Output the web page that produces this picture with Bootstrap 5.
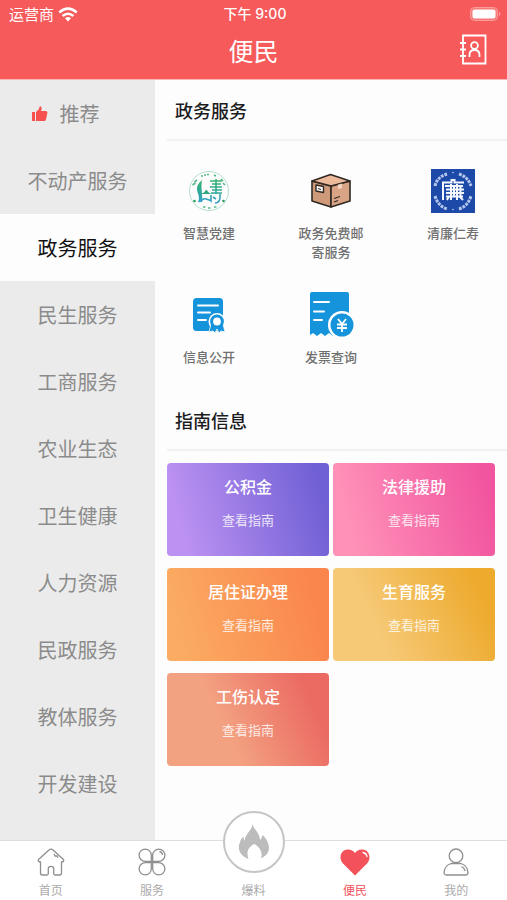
<!DOCTYPE html>
<html lang="zh-CN">
<head>
<meta charset="utf-8">
<meta name="viewport" content="width=device-width, initial-scale=1">
<title>便民</title>
<link href="https://cdn.jsdelivr.net/npm/bootstrap@5.3.0/dist/css/bootstrap.min.css" rel="stylesheet">
<style>
body{font-family:"Noto Sans CJK SC",sans-serif;background:#fdfdfd;color:#1c1c1e}
svg{display:block;flex:none}
a{text-decoration:none}
.top-area{background:#f65a5b;color:#fff;border-bottom:1px solid #fbb4b4}
.status-line{height:28px;font-size:15px;line-height:28px;padding:0 6px 0 9px}
.status-line .clock{font-family:Inter,"Noto Sans CJK SC",sans-serif;font-size:14px;font-weight:500}
.title-line{height:51px;padding-bottom:8px}
.title-line h1{font-size:25px;line-height:36px;font-weight:400}
.title-line .btn{margin-right:20px}
.side-nav{width:155px;background:#ebebeb}
.side-nav .nav-link{height:67px;padding:0;font-size:20px;line-height:28px;color:#8b8b8b}
.side-nav .nav-link.active{background:#fdfdfd;color:#111}
.section-title{height:61px;margin-left:12px;padding-left:8px;font-size:18px;line-height:28px;font-weight:500;border-bottom:2px solid #f2f2f2}
.service-grid{display:grid;grid-template-columns:repeat(3,72px);justify-content:space-between;row-gap:30px;padding:26px 18px 24px}
.service{font-size:13px;line-height:19px;color:#707070;font-weight:500}
.service .pic{height:48px;margin-bottom:8px}
.guide-grid{display:grid;grid-template-columns:1fr 1fr;gap:12px 4px;padding:12px 12px 24px}
.guide{height:93px;border-radius:4px;color:#fff;padding-top:11px;font-size:13px;line-height:20px}
.guide strong{font-size:16px;line-height:24px;font-weight:500;margin-bottom:12px}
.guide span{opacity:.8}
.g-fund{background:linear-gradient(75deg,#bb91f1 12%,#7060d5 92%)}
.g-law{background:linear-gradient(75deg,#ff91b8 12%,#f1559f 92%)}
.g-live{background:linear-gradient(75deg,#fbac62 8%,#fa854d 90%)}
.g-birth{background:linear-gradient(65deg,#f6c977 28%,#edaa2d 88%)}
.g-work{background:linear-gradient(65deg,#f3a281 36%,#eb6b63 85%)}
.tab-bar{height:60px;background:#fff;border-top:1px solid #dedede}
.tab-bar a{flex:1 1 0;color:#aaa;font-size:12px;line-height:17px;padding-bottom:2px}
.tab-bar a.active{color:#f4525b}
.tab-bar svg{margin-bottom:5px}
.tab-bar .flame{width:62px;height:62px;border:2px solid #c5c5c5;border-radius:50%;background:#fff;margin-bottom:8px}
.tab-bar .flame svg{margin:0}
</style>
<script src="https://cdn.jsdelivr.net/npm/bootstrap@5.3.0/dist/js/bootstrap.bundle.min.js"></script>
</head>
<body class="d-flex flex-column min-vh-100">
<header class="top-area">
  <div class="status-line row g-0">
    <div class="col d-flex align-items-center gap-1">
      <span>运营商</span>
      <svg width="20" height="15" viewBox="0 0 20 15" fill="none" stroke="#fff" stroke-width="2.6" aria-hidden="true"><path d="M1.3 5.4Q10-2.1 18.7 5.4M4.6 9Q10 4.5 15.4 9"/><path d="M7 11.3Q10 8.8 13 11.3L10 14.5Z" fill="#fff" stroke="none"/></svg>
    </div>
    <div class="col-auto clock">下午 9:00</div>
    <div class="col d-flex align-items-center justify-content-end">
      <svg width="31" height="15" viewBox="0 0 31 15" aria-hidden="true"><rect x=".5" y=".5" width="27" height="13" rx="4" fill="#f77879" stroke="#fa9c9c"/><rect x="2.5" y="2.5" width="23" height="9" rx="2" fill="#fff"/><path d="M29 5v4q1.5-.6 1.5-2T29 5" fill="#faa0a0"/></svg>
    </div>
  </div>
  <div class="title-line row g-0 align-items-center">
    <div class="col"></div>
    <h1 class="col-auto m-0">便民</h1>
    <div class="col d-flex justify-content-end">
      <button type="button" class="btn p-0 border-0" aria-label="通讯录">
        <svg width="28" height="31" viewBox="0 0 28 31" fill="none" stroke="#fff" stroke-width="1.8"><path d="M4 1.5H26.5V29.5H4ZM1 9h6M1 15.5h6M1 22h6"/><circle cx="15.5" cy="11.5" r="3.4"/><path d="M10.500 23v-2q0-5 5-5t5 5v2"/></svg>
      </button>
    </div>
  </div>
</header>

<main class="d-flex flex-grow-1">
  <nav class="side-nav nav flex-column flex-nowrap flex-shrink-0" aria-label="服务分类">
    <a href="#" class="nav-link d-flex align-items-center justify-content-center pe-4"><svg width="16" height="16" viewBox="0 0 16 16" fill="#f6514f" class="me-2" aria-hidden="true"><path d="M0 6h3v9H0ZM4 6l3-3 .5-2.300Q8.400-.3 9.300 1q.7 1.500-.3 4h5q1.600.3 1.400 2L14 13.500Q13.600 15 12 15H4Z"/></svg><span class="ms-1">推荐</span></a>
    <a href="#" class="nav-link d-flex align-items-center justify-content-center">不动产服务</a>
    <a href="#" class="nav-link active d-flex align-items-center justify-content-center" aria-current="true">政务服务</a>
    <a href="#" class="nav-link d-flex align-items-center justify-content-center">民生服务</a>
    <a href="#" class="nav-link d-flex align-items-center justify-content-center">工商服务</a>
    <a href="#" class="nav-link d-flex align-items-center justify-content-center">农业生态</a>
    <a href="#" class="nav-link d-flex align-items-center justify-content-center">卫生健康</a>
    <a href="#" class="nav-link d-flex align-items-center justify-content-center">人力资源</a>
    <a href="#" class="nav-link d-flex align-items-center justify-content-center">民政服务</a>
    <a href="#" class="nav-link d-flex align-items-center justify-content-center">教体服务</a>
    <a href="#" class="nav-link d-flex align-items-center justify-content-center">开发建设</a>
  </nav>

  <div class="flex-grow-1">
    <section>
      <h2 class="section-title d-flex align-items-center mb-0">政务服务</h2>
      <div class="service-grid">
        <a href="#" class="service text-center">
          <span class="pic d-flex align-items-center justify-content-center"><svg width="42" height="42" viewBox="0 0 42 42" fill="none" aria-hidden="true">
            <defs><linearGradient id="leaf" gradientUnits="userSpaceOnUse" x1="0" y1="9" x2="0" y2="34"><stop offset="0" stop-color="#38b36c"/><stop offset=".55" stop-color="#2fa89a"/><stop offset="1" stop-color="#3c9fd3"/></linearGradient></defs>
            <circle cx="21" cy="21" r="19.500" stroke="#a5d8c0" stroke-width=".8"/>
            <path d="M4.500 15l3-2M6.500 12l2.500-2M13 6h2M16 5h2M19 4.500h2M26 5l2 1M33 9l2 2M35 13l2 2" stroke="#58b98a" stroke-width="1.700"/>
            <path d="M15 37h2.500M20 38h2.500M26 37h2.500" stroke="#58b98a" stroke-width="1.600"/>
            <circle cx="6.500" cy="31" r="1.300" fill="#2c9d60"/><circle cx="35.500" cy="31" r="1.300" fill="#2c9d60"/>
            <path d="M14 10Q7 16 9.500 22T10 32Q15 34 14 24T14 10Z" fill="url(#leaf)"/>
            <path d="M12 24q5-1 6-4.500 3 4 6 4.500Z" fill="#2fa57d"/>
            <path d="M13 32q1-4 5-3t5 2V25M22 11h12M24 14h9M22 17h12M24 20h10M23 23h11M28 9v15M32 24q1 9-5 9M25 27l3 2" stroke="url(#leaf)" stroke-width="1.600"/>
          </svg></span>智慧党建</a>
        <a href="#" class="service text-center">
          <span class="pic d-flex align-items-center justify-content-center"><svg width="40" height="36" viewBox="0 0 40 36" stroke="#302822" stroke-width="1.600" stroke-linejoin="round" aria-hidden="true">
            <path d="M1 8 20 13V34L1 28Z" fill="#cf9a7a"/><path d="M20 13 39 8V28L20 34Z" fill="#d9a486"/><path d="M1 8 19.500 1.500 39 8 20 13Z" fill="#ecb99b"/>
            <path d="M27 11.500V16L31 15V10.500Z" fill="#fbe1d2" stroke="none" opacity=".8"/>
            <path d="M5 12 12.500 13.500V19.500L5 18Z" fill="#fff" stroke-width="1.400"/><path d="M7 15.500l3 1M23 25.500l6-2M23 29l4-1.500" fill="none" stroke-width="1.100"/>
          </svg></span>政务免费邮寄服务</a>
        <a href="#" class="service text-center">
          <span class="pic d-flex align-items-center justify-content-center"><svg width="44" height="44" viewBox="0 0 44 44" fill="none" aria-hidden="true">
            <path d="M0 0h44v44H0Z" fill="#1d4aa9"/>
            <g stroke="#b5c7ec" stroke-width="3" stroke-dasharray="2.800 1"><path d="M4 17Q6 8 16 5"/><path d="M28 5Q37 8 40 17"/><path d="M4 27Q7 37 16 40"/><path d="M28 40Q37 37 40 27"/></g>
            <circle cx="22" cy="3.500" r=".8" fill="#c7d5f1"/><circle cx="22" cy="40.500" r=".8" fill="#c7d5f1"/>
            <path d="M12 31V13.500h8.500v-2.500h3v2.500H33M14 17h18M15 20.500h18M15 24h18M15 27.500h17M20 15v16M26 15v16M23 17v11M29.500 17v11M18 27l-2 4M28 27l4 4" stroke="#f4f7ff" stroke-width="2"/>
          </svg></span>清廉仁寿</a>
        <a href="#" class="service text-center">
          <span class="pic d-flex align-items-center justify-content-center"><svg width="32" height="36" viewBox="0 0 32 36" aria-hidden="true">
            <rect x="0" y="1" width="30" height="33" rx="3.500" fill="#1594dc"/><path d="M5 8.500h20M5 15.500h12M5 23h8" stroke="#fff" stroke-width="2" stroke-linecap="round"/>
            <circle cx="24" cy="24.500" r="8.500" fill="#fdfdfd"/><path d="M18 27h12l2 8-4-1-2 2-2-4-2 4-2-2-4 1Z" fill="#1594dc" stroke="#fdfdfd" stroke-width=".8"/><circle cx="24" cy="24.500" r="5.400" fill="#fff" stroke="#1594dc" stroke-width="3"/>
          </svg></span>信息公开</a>
        <a href="#" class="service text-center">
          <span class="pic d-flex align-items-center justify-content-center"><svg width="46" height="46" viewBox="0 0 46 46" fill="none" aria-hidden="true">
            <path d="M3 0H39q2 0 2 2V43l-4-2-4 3-4-3-4 3-4-3-4 3-4-3-4 3-4-3-3 2V2q0-2 2-2Z" fill="#1594dc"/><path d="M6 10h15M6 19.500h10M6 28h8" stroke="#fff" stroke-width="2" stroke-linecap="round"/>
            <circle cx="34" cy="33" r="14" fill="#fdfdfd"/><circle cx="34" cy="33" r="11.500" fill="#1594dc"/><path d="M30 27l4 5 4-5M34 32v8M29 32.500h10M29 36h10" stroke="#fff" stroke-width="1.800"/>
          </svg></span>发票查询</a>
      </div>
    </section>
    <section>
      <h2 class="section-title d-flex align-items-center mb-0">指南信息</h2>
      <div class="guide-grid">
        <a href="#" class="guide g-fund d-flex flex-column align-items-center"><strong>公积金</strong><span>查看指南</span></a>
        <a href="#" class="guide g-law d-flex flex-column align-items-center"><strong>法律援助</strong><span>查看指南</span></a>
        <a href="#" class="guide g-live d-flex flex-column align-items-center"><strong>居住证办理</strong><span>查看指南</span></a>
        <a href="#" class="guide g-birth d-flex flex-column align-items-center"><strong>生育服务</strong><span>查看指南</span></a>
        <a href="#" class="guide g-work d-flex flex-column align-items-center"><strong>工伤认定</strong><span>查看指南</span></a>
      </div>
    </section>
  </div>
</main>

<nav class="tab-bar d-flex sticky-bottom" aria-label="主导航">
  <a href="#" class="d-flex flex-column align-items-center justify-content-end"><svg width="28" height="28" viewBox="0 0 28 28" fill="none" stroke="#8f8f8f" stroke-width="1.300" stroke-linejoin="round" aria-hidden="true"><path d="M14 1.200Q13 1.200 12 2L1.500 11.500Q.5 13.800 3.500 14V25q0 2 2 2H10q1.300 0 1.300-1.500V20.500q0-2.200 2.700-2.200t2.700 2.200V25.500Q16.700 27 18 27h4.500q2 0 2-2V14q3-.2 2-2.500L16 2Q15 1.200 14 1.200ZM17 6l1 2 2-.2 1 2"/></svg>首页</a>
  <a href="#" class="d-flex flex-column align-items-center justify-content-end"><svg width="28" height="28" viewBox="0 0 28 28" fill="none" stroke="#8f8f8f" stroke-width="1.300" aria-hidden="true"><path d="M13.300 13.300H7.200a6.100 6.100 0 1 1 6.100-6.100ZM14.700 13.300V7.200a6.100 6.100 0 1 1 6.100 6.100ZM13.300 14.700v6.100a6.100 6.100 0 1 1-6.100-6.100ZM14.700 14.700h6.100a6.100 6.100 0 1 1-6.100 6.100ZM21.500 3.500q2.800.7 3 3.500"/></svg>服务</a>
  <a href="#" class="d-flex flex-column align-items-center justify-content-end"><span class="flame d-flex align-items-center justify-content-center flex-shrink-0"><svg width="32" height="36" viewBox="0 0 32 36" fill="#bcbcbc" aria-hidden="true"><path d="M14.500 0C16 6 22 9 22 16q2-1.500 2.500-5C29 15 31 20 31 24q0 6.500-8 10.500c2-6-1-11-6.500-14.500C10 23 8 28 10.500 35 3 32 0 27 1 21q.8-5 4.500-9-.5 3 1.200 4.500C7.500 9 14 7 14.500 0Z"/></svg></span>爆料</a>
  <a href="#" class="active d-flex flex-column align-items-center justify-content-end" aria-current="page"><svg width="30" height="28" viewBox="0 0 30 28" aria-hidden="true"><path d="M15 27.500 2.500 15C-1.500 10 .7 2 7.500 1.500Q12.500 1.200 15 5 17.500 1.200 22.500 1.500C29.300 2 31.500 10 27.500 15Z" fill="#f4525b"/><path d="M23 4.500q3.500.8 4 4" fill="none" stroke="#fff" stroke-width="1.300" stroke-linecap="round"/></svg>便民</a>
  <a href="#" class="d-flex flex-column align-items-center justify-content-end"><svg width="26" height="28" viewBox="0 0 26 28" fill="none" stroke="#8f8f8f" stroke-width="1.300" aria-hidden="true"><circle cx="13" cy="7.800" r="6.800"/><path d="M8 15.500h10q6.500 2 7 9 0 2.500-2.500 2.500h-19Q1 27 1 24.500q.5-7 7-9ZM18.500 18.500q3 1.500 3.700 4.500"/></svg>我的</a>
</nav>
</body>
</html>
